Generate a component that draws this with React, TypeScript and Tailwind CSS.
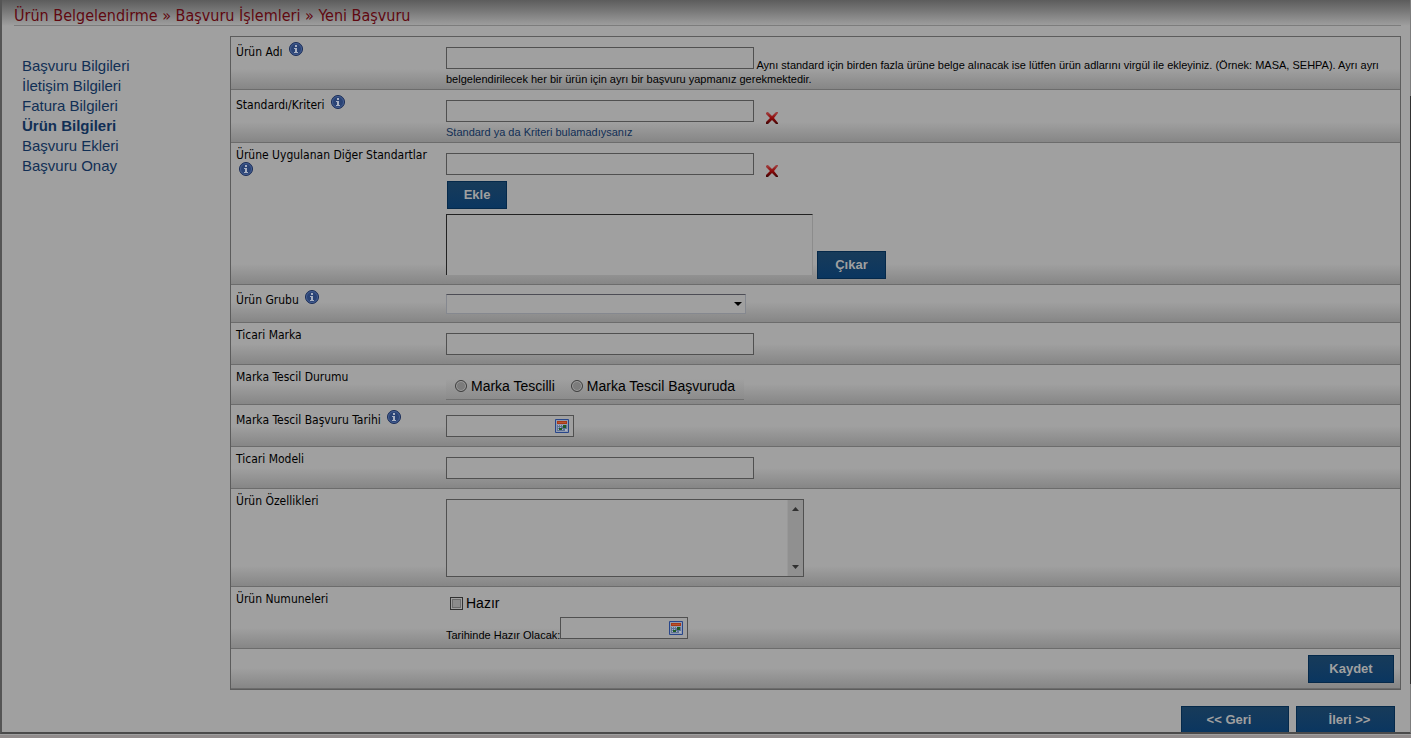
import React from 'react';

const steps = [
  { label: 'Başvuru Bilgileri' },
  { label: 'İletişim Bilgileri' },
  { label: 'Fatura Bilgileri' },
  { label: 'Ürün Bilgileri', active: true },
  { label: 'Başvuru Ekleri' },
  { label: 'Başvuru Onay' },
];

const inputClass = 'h-[22px] border border-[#505050] bg-[#a0a0a0] px-1 text-xs text-black outline-none';

function InfoIcon() {
  return (
    <svg className="ml-[3px] inline-block align-baseline" width="14" height="14" viewBox="0 0 14 14" aria-hidden="true">
      <circle cx="7" cy="7" r="6.5" fill="#2a4375" stroke="#1a2d58" />
      <circle cx="7" cy="7" r="5.5" fill="none" stroke="#4c6698" strokeWidth="0.8" />
      <path d="M6 3h2v2H6zM5 6h3v4h1v1H5v-1h1V7H5z" fill="#a9b1c2" />
    </svg>
  );
}

function ClearButton({ label }: { label: string }) {
  return (
    <button type="button" aria-label={label} className="mb-px ml-3 block">
      <svg width="12" height="12" viewBox="0 0 12 12">
        <defs>
          <linearGradient id="cross" x1="0" y1="0" x2="0" y2="1">
            <stop offset="0" stopColor="#a04848" />
            <stop offset="0.5" stopColor="#900808" />
            <stop offset="1" stopColor="#400808" />
          </linearGradient>
        </defs>
        <path d="M2 0l4 4 4-4h2v1L8 6l4 5v1h-2L6 8l-4 4H0v-2l4-4-4-4V1l1-1z" fill="url(#cross)" />
      </svg>
    </button>
  );
}

function CalendarIcon() {
  return (
    <svg width="14" height="14" viewBox="0 0 14 14">
      <path d="M0.5 0.5h13v13H0.5z" fill="#929cb0" stroke="#28468a" />
      <path d="M2 2h10v3H2z" fill="#a83818" />
      <path d="M3 3h8v1H3z" fill="#b8552c" />
      <path d="M2 6h10v6H2z" fill="#5f7396" />
      <path d="M3 6h1v1H3zM5 6h1v1H5zM7 6h1v1H7zM3 8h1v1H3zM5 8h1v1H5zM3 10h1v1H3zM7 10h1v1H7zM10 10h2v2h-2z" fill="#a9b1c0" />
      <path d="M8 6h3v3H8zM4 9h3v2H4z" fill="#1f5c28" />
    </svg>
  );
}

function DateInput({ id }: { id: string }) {
  return (
    <div className="flex h-[22px] w-32 items-center border border-[#505050] bg-[#a0a0a0] pr-1">
      <input id={id} type="text" className="w-full min-w-0 flex-1 px-1 text-xs outline-none" />
      <button type="button" aria-label="Takvim">
        <CalendarIcon />
      </button>
    </div>
  );
}

function ActionButton({ children, className }: { children: React.ReactNode; className: string }) {
  return (
    <button
      type="button"
      className={`border border-[#05294a] bg-linear-to-b from-[#173b5a] to-[#0a3660] text-[13px] font-bold text-[#a0a0a0] ${className}`}
    >
      {children}
    </button>
  );
}

interface RowProps {
  label: string;
  htmlFor?: string;
  info?: boolean;
  className: string;
  children: React.ReactNode;
}

function Row({ label, htmlFor, info, className, children }: RowProps) {
  return (
    <div className="flex border-b border-[#6c6c6c] bg-[#a0a0a0] bg-[linear-gradient(to_top,#868686,#a0a0a0)] bg-[length:100%_20px] bg-bottom bg-no-repeat pl-[5px]">
      <label
        htmlFor={htmlFor}
        className="w-[210px] shrink-0 pt-[5px] pr-2 font-['DejaVu_Sans_Condensed','DejaVu_Sans',sans-serif] text-[12px] leading-[14px]"
      >
        {label} {info && <InfoIcon />}
      </label>
      <div className={`min-w-0 flex-1 ${className}`}>{children}</div>
    </div>
  );
}

export default function App() {
  return (
    <div className="relative flex min-h-screen flex-col bg-[#918c8c] font-['Liberation_Sans',Arial,sans-serif] text-black">
      <div className="flex flex-1 flex-col border-r border-b-2 border-l-2 border-r-[#7c7c7c] border-b-[#4a4a4a] border-l-[#555555] bg-[#a0a0a0]">
        <header className="bg-linear-to-b from-[#5c5c5c] to-[#a0a0a0] pr-[9px] pl-3">
          <h1 className="border-b border-[#7c7c7c] pt-1.5 font-['DejaVu_Sans_Condensed','DejaVu_Sans',sans-serif] text-[16px] leading-[19px] text-[#600810]">
            Ürün Belgelendirme » Başvuru İşlemleri » Yeni Başvuru
          </h1>
        </header>

        <div className="flex flex-1 pr-[9px]">
          <nav className="w-[228px] shrink-0 pt-[30px] pl-5">
            <ul>
              {steps.map((step) => (
                <li key={step.label} className="leading-5">
                  <a href="#" className={`text-[15px] text-[#112f55] ${step.active ? 'font-bold' : ''}`}>
                    {step.label}
                  </a>
                </li>
              ))}
            </ul>
          </nav>

          <form className="flex min-w-0 flex-1 flex-col pt-2.5">
            <div className="border border-[#5c5c5c]">
              <Row label="Ürün Adı" htmlFor="urun-adi" info className="pt-2.5 pr-5 pb-[3px] text-[11px] leading-[14px]">
                <input id="urun-adi" type="text" className={`${inputClass} mb-0.5 w-[308px] align-text-bottom`} />{' '}
                Aynı standard için birden fazla ürüne belge alınacak ise lütfen ürün adlarını virgül ile ekleyiniz.
                (Örnek: MASA, SEHPA). Ayrı ayrı belgelendirilecek her bir ürün için ayrı bir başvuru yapmanız
                gerekmektedir.
              </Row>

              <Row label="Standardı/Kriteri" htmlFor="standard" info className="pt-2.5 pb-[3px]">
                <div className="flex h-[25px] items-end">
                  <input id="standard" type="text" className={`${inputClass} w-[308px] self-start`} />
                  <ClearButton label="Standardı temizle" />
                </div>
                <a href="#" className="block text-[11px] leading-[14px] text-[#112f55]">
                  Standard ya da Kriteri bulamadıysanız
                </a>
              </Row>

              <Row label="Ürüne Uygulanan Diğer Standartlar" htmlFor="diger" info className="pt-2.5 pb-[5px]">
                <div className="flex h-[25px] items-end">
                  <input id="diger" type="text" className={`${inputClass} w-[308px] self-start`} />
                  <ClearButton label="Diğer standardı temizle" />
                </div>
                <ActionButton className="mt-[3px] ml-px block h-7 w-[60px]">Ekle</ActionButton>
                <div className="mt-[5px] flex items-end gap-1">
                  <select
                    size={4}
                    aria-label="Eklenen standartlar"
                    className="mb-1 h-[61px] w-[367px] appearance-none border-t border-r border-l border-t-[#222222] border-r-[#8c8c8c] border-l-[#222222] bg-[#a0a0a0] outline-none"
                  />
                  <ActionButton className="h-7 w-[69px]">Çıkar</ActionButton>
                </div>
              </Row>

              <Row label="Ürün Grubu" htmlFor="grup" info className="pt-[9px] pb-2">
                <div className="relative w-[300px]">
                  <select
                    id="grup"
                    className="block h-5 w-full appearance-none border border-[#85888f] border-t-[#4d4d55] bg-[#a0a0a0] text-xs outline-none"
                  >
                    <option></option>
                  </select>
                  <svg className="pointer-events-none absolute top-2 right-1" width="8" height="4" viewBox="0 0 8 4">
                    <path d="M0 0h8L4 4z" fill="#000" />
                  </svg>
                </div>
              </Row>

              <Row label="Ticari Marka" htmlFor="marka" className="pt-2.5 pb-[9px]">
                <input id="marka" type="text" className={`${inputClass} block w-[308px]`} />
              </Row>

              <Row label="Marka Tescil Durumu" className="pt-2.5 pb-1">
                <div className="flex h-[25px] w-[298px] items-center gap-4 border-b border-[#707070] bg-[linear-gradient(to_top,#8c8c8c,#a0a0a0)] bg-[length:100%_20px] bg-bottom bg-no-repeat pb-0.5 pl-[9px] text-[14px]">
                  {['Marka Tescilli', 'Marka Tescil Başvuruda'].map((option) => (
                    <label key={option} className="flex items-center gap-1 whitespace-nowrap">
                      <input
                        type="radio"
                        name="tescil"
                        className="size-3 shrink-0 appearance-none rounded-full border border-[#3f3f3f] bg-[#7c7c7c] shadow-[inset_0_0_0_1px_#a0a0a0]"
                      />
                      {option}
                    </label>
                  ))}
                </div>
              </Row>

              <Row label="Marka Tescil Başvuru Tarihi" htmlFor="tescil-tarihi" info className="pt-2.5 pb-[9px]">
                <DateInput id="tescil-tarihi" />
              </Row>

              <Row label="Ticari Modeli" htmlFor="model" className="pt-2.5 pb-[9px]">
                <input id="model" type="text" className={`${inputClass} block w-[308px]`} />
              </Row>

              <Row label="Ürün Özellikleri" htmlFor="ozellikler" className="pt-2.5 pb-[9px]">
                <div className="flex h-[78px] w-[358px] border border-[#505050] bg-[#a0a0a0]">
                  <textarea id="ozellikler" className="min-w-0 flex-1 resize-none p-1 text-xs outline-none" />
                  <div className="flex w-4 flex-col items-center justify-between border-l border-[#999999] bg-[#909090] py-[7px]">
                    <svg width="7" height="4" viewBox="0 0 7 4">
                      <path d="M0 4h7L3.5 0z" fill="#303030" />
                    </svg>
                    <svg width="7" height="4" viewBox="0 0 7 4">
                      <path d="M0 0h7L3.5 4z" fill="#303030" />
                    </svg>
                  </div>
                </div>
              </Row>

              <Row label="Ürün Numuneleri" className="pt-1.5 pb-[9px]">
                <label className="flex h-5 w-fit items-center gap-[3px] pl-1 text-[14px]">
                  <input
                    type="checkbox"
                    className="size-[13px] appearance-none border border-[#303030] bg-[#8c8c8c] shadow-[inset_0_0_0_1px_#a0a0a0,inset_0_0_0_2px_#6c6c6c]"
                  />
                  Hazır
                </label>
                <div className="mt-1 flex h-[22px] items-start">
                  <label htmlFor="hazir-tarihi" className="pt-[11px] text-[11px] leading-[14px]">
                    Tarihinde Hazır Olacak:
                  </label>
                  <DateInput id="hazir-tarihi" />
                </div>
              </Row>

              <div className="flex justify-end border-b border-[#6c6c6c] bg-[linear-gradient(to_top,#868686,#a0a0a0)] bg-[length:100%_20px] bg-bottom bg-no-repeat pt-1.5 pr-1.5 pb-[5px]">
                <ActionButton className="h-7 w-[86px]">Kaydet</ActionButton>
              </div>
            </div>

            <div className="mt-4 flex justify-end gap-[7px] pr-1.5">
              <ActionButton className="h-[26px] w-[108px] border-b-0 pr-3">{'<< Geri'}</ActionButton>
              <ActionButton className="h-[26px] w-[99px] border-b-0 pl-2">{'İleri >>'}</ActionButton>
            </div>
          </form>
        </div>
      </div>
      <div className="h-1 border-t border-[#a0a0a0]" />
      {/* scroll thumb along the window edge */}
      <div className="absolute top-24 right-0 bottom-[54px] w-px bg-[#303030]" />
    </div>
  );
}
